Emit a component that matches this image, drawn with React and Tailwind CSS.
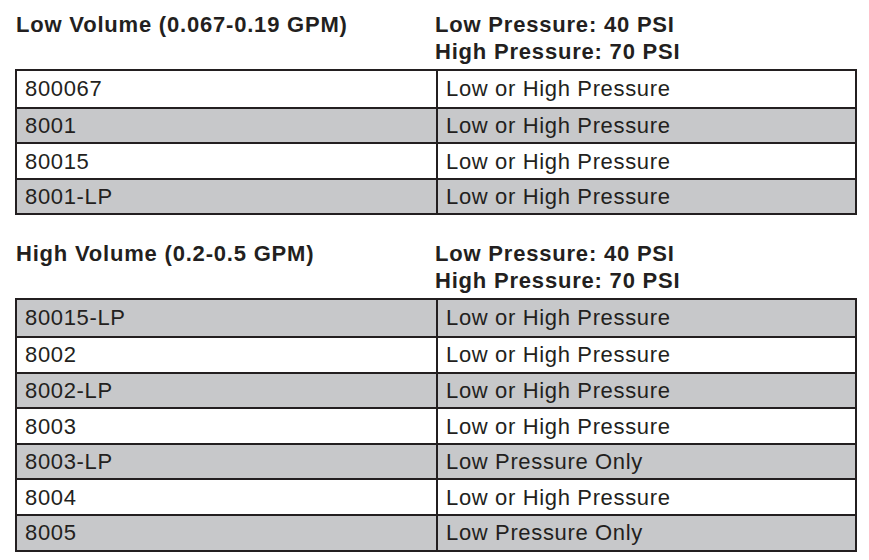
import React from 'react';

const sections = [
  {
    title: 'Low Volume (0.067-0.19 GPM)',
    firstGray: false,
    rows: [
      ['800067', 'Low or High Pressure'],
      ['8001', 'Low or High Pressure'],
      ['80015', 'Low or High Pressure'],
      ['8001-LP', 'Low or High Pressure'],
    ],
  },
  {
    title: 'High Volume (0.2-0.5 GPM)',
    firstGray: true,
    rows: [
      ['80015-LP', 'Low or High Pressure'],
      ['8002', 'Low or High Pressure'],
      ['8002-LP', 'Low or High Pressure'],
      ['8003', 'Low or High Pressure'],
      ['8003-LP', 'Low Pressure Only'],
      ['8004', 'Low or High Pressure'],
      ['8005', 'Low Pressure Only'],
    ],
  },
];

const Section = ({ title, rows, firstGray, className }) => {
  return (
    <div className={className}>
      {/* en-tête : débit à gauche, pressions à droite */}
      <div className="grid grid-cols-2 h-[55px] font-bold text-[22px] leading-[27.5px] tracking-[0.8px]">
        <div className="pl-px">{title}</div>
        <div className="-ml-px">
          <div>Low Pressure: 40 PSI</div>
          <div>High Pressure: 70 PSI</div>
        </div>
      </div>

      <div className="mt-[3.5px] border-2 border-[#231f20] text-[22px] tracking-[0.65px]">
        {rows.map(([model, pressure], i) => {
          const gray = firstGray ? i % 2 === 0 : i % 2 === 1;
          return (
            <div
              key={model}
              className={`grid grid-cols-2 h-[35.6px] ${i > 0 ? 'border-t-2 border-[#231f20]' : ''} ${gray ? 'bg-[#c7c8ca]' : 'bg-white'}`}
            >
              <div className="pl-2 pt-[1.5px] leading-[32px]">{model}</div>
              <div className="pl-2 pt-[1.5px] leading-[32px] border-l-2 border-[#231f20]">{pressure}</div>
            </div>
          );
        })}
      </div>
    </div>
  );
};

export default function App() {
  return (
    <div className="w-[869px] h-[560px] bg-white text-[#231f20] font-['Liberation_Sans',Arial,sans-serif] pt-[10.5px] overflow-hidden">
      <div className="ml-[15px] w-[842px]">
        <Section {...sections[0]} />
        <Section {...sections[1]} className="mt-[24.5px]" />
      </div>
    </div>
  );
}
